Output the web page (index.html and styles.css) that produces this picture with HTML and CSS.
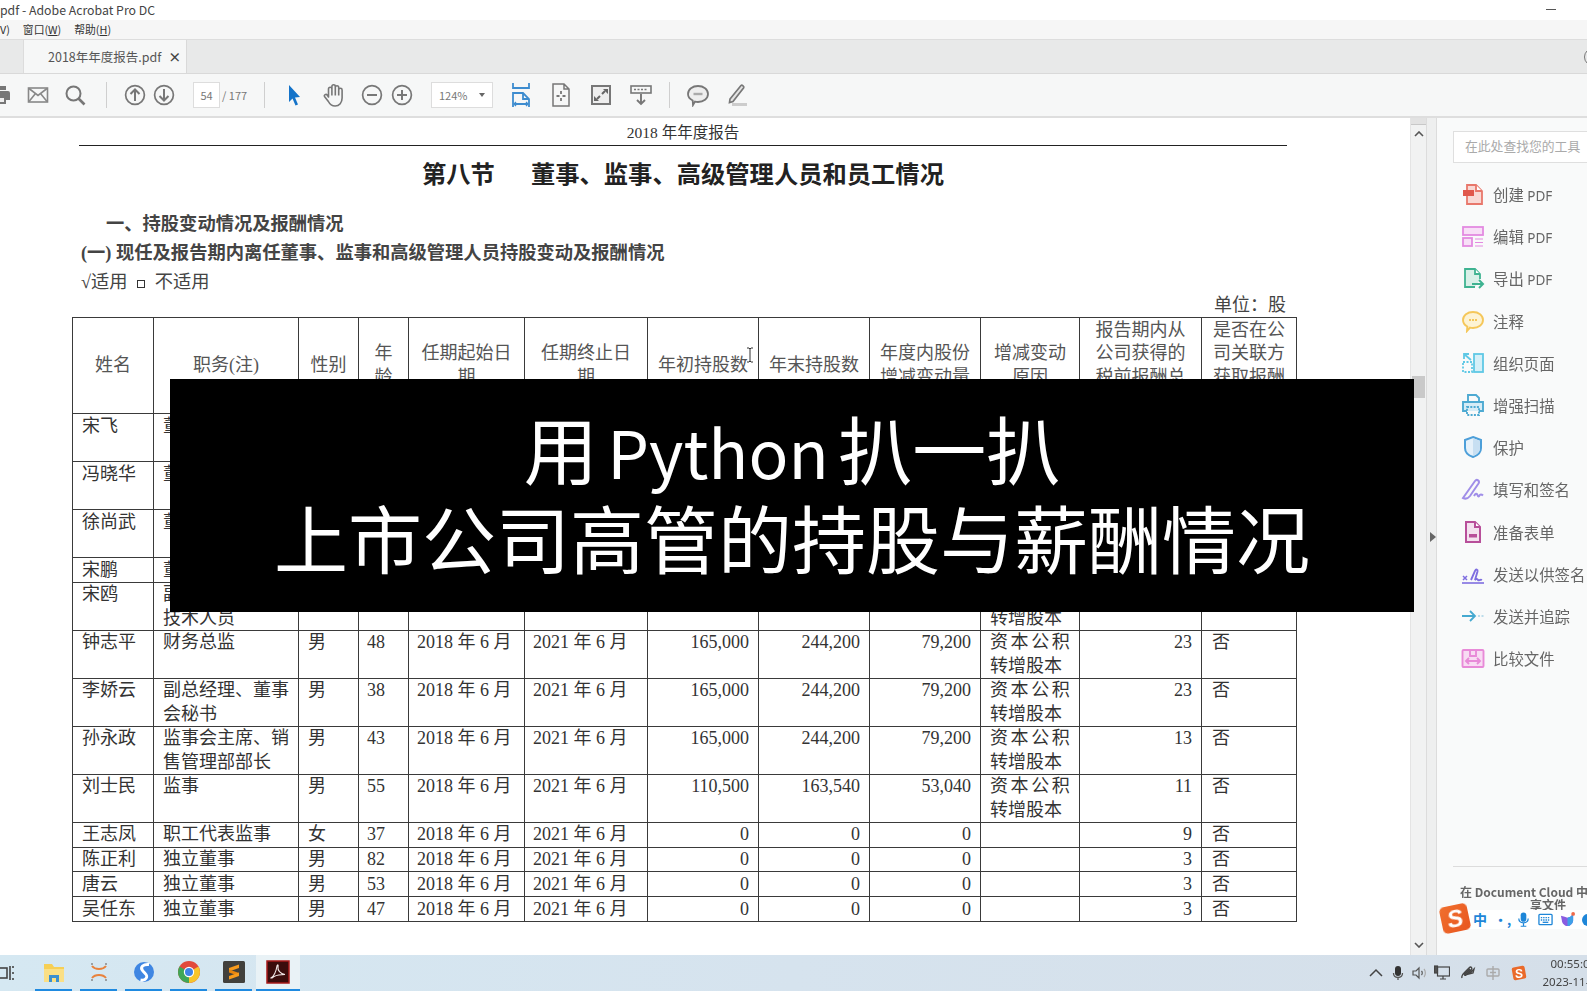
FILE: index.html
```html
<!DOCTYPE html>
<html lang="zh-CN">
<head>
<meta charset="utf-8">
<title>2018年年度报告.pdf - Adobe Acrobat Pro DC</title>
<link rel="stylesheet" href="styles.css">
</head>
<body>
<div class="app">
  <header class="titlebar">
    <span>pdf - Adobe Acrobat Pro DC</span>
    <span class="minimize"></span>
  </header>
  <nav class="menubar">
    <span class="menu-cut">V)</span>
    <span class="menu-win">窗口(<u>W</u>)</span>
    <span class="menu-help">帮助(<u>H</u>)</span>
  </nav>
  <div class="tabbar">
    <div class="tab"><span>2018年年度报告.pdf</span><span class="tab-close">×</span></div>
    <span class="tab-circle"></span>
  </div>
  <div class="toolbar">
    <div class="tb-group first">
      <svg class="ic" viewBox="0 0 24 24"><path d="M7 7V3h10v4M5 8h14a2 2 0 0 1 2 2v7h-4v4H7v-4H3v-7a2 2 0 0 1 2-2z" fill="#777"/><rect x="9" y="15" width="6" height="4" fill="#eee"/></svg>
      <svg class="ic" viewBox="0 0 24 24" fill="none" stroke="#888" stroke-width="1.6"><rect x="2.5" y="5" width="19" height="14"/><path d="M3 5.5l9 7 9-7M3 18.5l6.5-8M21 18.5l-6.5-8"/></svg>
      <svg class="ic" viewBox="0 0 24 24" fill="none" stroke="#777" stroke-width="2"><circle cx="10.5" cy="10.5" r="7"/><path d="M15.5 15.5l6 6" stroke-width="2.6"/></svg>
    </div>
    <span class="tb-div d1"></span>
    <div class="tb-group g2">
      <svg class="ic" viewBox="0 0 24 24" fill="none" stroke="#777" stroke-width="1.7"><circle cx="12" cy="12" r="9.4"/><path d="M12 18V6.5M7.5 11L12 6.5 16.5 11" stroke-width="2"/></svg>
      <svg class="ic" viewBox="0 0 24 24" fill="none" stroke="#777" stroke-width="1.7"><circle cx="12" cy="12" r="9.4"/><path d="M12 6v11.5M7.5 13l4.500 4.500 4.500-4.500" stroke-width="2"/></svg>
    </div>
    <span class="page-input">54</span>
    <span class="page-total">/ 177</span>
    <span class="tb-div d2"></span>
    <svg class="ic cursor" viewBox="0 0 24 24"><path d="M7 2l11 12-5 .5 3 7-2.500 1-3-7L7 19z" fill="#1473c9"/></svg>
    <svg class="ic hand" viewBox="0 0 24 24" fill="none" stroke="#777" stroke-width="1.6" stroke-linejoin="round"><path d="M6.500 13V6a1.700 1.700 0 0 1 3.400 0V3.500a1.700 1.700 0 0 1 3.400 0V4.500a1.700 1.700 0 0 1 3.400 0V7a1.700 1.700 0 0 1 3.400 0v8c0 4.500-2.700 8-7 8-3.500 0-5.200-1.500-6.700-4.500L2.500 13.500c-.8-1.500 1.500-3 2.700-1.500l1.300 2zM9.900 6v6.500M13.300 4.500v8M16.700 5v7.500"/></svg>
    <svg class="ic minus" viewBox="0 0 24 24" fill="none" stroke="#777" stroke-width="1.7"><circle cx="12" cy="12" r="9.400"/><path d="M7 12h10" stroke-width="2"/></svg>
    <svg class="ic plus" viewBox="0 0 24 24" fill="none" stroke="#777" stroke-width="1.7"><circle cx="12" cy="12" r="9.400"/><path d="M7 12h10M12 7v10" stroke-width="2"/></svg>
    <div class="zoom-box"><span>124%</span><span class="caret"></span></div>
    <div class="tb-group g4">
      <svg class="ic" viewBox="0 0 24 24" fill="none" stroke="#3d8ccf" stroke-width="1.800"><path d="M4 0v5h16V0M4 24V10h10l6 6v8M14 10v6h6M6 21h12"/><path d="M7 19l-2 2 2 2M17 19l2 2-2 2" stroke-width="1.300"/></svg>
      <svg class="ic" viewBox="0 0 24 24" fill="none" stroke="#777" stroke-width="1.500"><path d="M4 1h11l5 5v17H4zM15 1v5h5"/><path d="M12 8v3M12 15v3M7.500 13h3M13.500 13h3" stroke-width="1.800"/></svg>
      <svg class="ic" viewBox="0 0 24 24"><rect x="3" y="3" width="18" height="18" fill="#eee" stroke="#777" stroke-width="2"/><path d="M14 6h5v5zM10 18H5v-5z" fill="#666"/><path d="M16 8l-3 3M8 16l3-3" stroke="#666" stroke-width="2"/></svg>
      <svg class="ic" viewBox="0 0 24 24" fill="none" stroke="#777" stroke-width="1.600"><rect x="2" y="3" width="20" height="7"/><path d="M5 6.500h14" stroke-dasharray="2 1.500"/><path d="M12 11v10M8 17l4 4 4-4" stroke-width="1.900"/></svg>
    </div>
    <span class="tb-div d3"></span>
    <div class="tb-group g5">
      <svg class="ic" viewBox="0 0 24 24" fill="#eee" stroke="#777" stroke-width="1.800"><path d="M12 3c5.500 0 10 3.400 10 8s-4.500 8-10 8c-1 0-2-.1-3-.4L7 22l-.3-4.500C3.800 16 2 13.700 2 11c0-4.600 4.500-8 10-8z"/><path d="M7.500 11h9" stroke-width="2.400" stroke="#aaa"/></svg>
      <svg class="ic" viewBox="0 0 24 24" fill="#e4e4e4" stroke="#777" stroke-width="1.700"><path d="M5 16L16 2.500c1-1 3.500 1 2.700 2.300L8 18.500l-3.500 1z"/><path d="M7 21.500h15" stroke="#ccc" stroke-width="3"/></svg>
    </div>
  </div>
  <main class="workspace">
    <section class="doc">
      <div class="doc-head">2018 年年度报告</div>
      <h1 class="doc-title">第八节<span class="title-gap"></span>董事、监事、高级管理人员和员工情况</h1>
      <h2 class="sec-one">一、持股变动情况及报酬情况</h2>
      <h3 class="sec-two">(一) 现任及报告期内离任董事、监事和高级管理人员持股变动及报酬情况</h3>
      <p class="check">√适用 <span class="box"></span> 不适用</p>
      <p class="unit">单位&#xFF1A;股</p>
      <table class="report">
        <colgroup>
          <col class="c1"><col class="c2"><col class="c3"><col class="c4"><col class="c5"><col class="c6"><col class="c7"><col class="c8"><col class="c9"><col class="c10"><col class="c11"><col class="c12">
        </colgroup>
        <thead>
          <tr>
            <th>姓名</th><th>职务(注)</th><th>性别</th><th>年龄</th><th>任期起始日期</th><th>任期终止日期</th><th>年初持股数</th><th>年末持股数</th><th>年度内股份增减变动量</th><th>增减变动原因</th><th class="th-top">报告期内从公司获得的税前报酬总额</th><th class="th-top">是否在公司关联方获取报酬</th>
          </tr>
        </thead>
        <tbody>
          <tr class="tall"><td>宋飞</td><td>董事</td><td></td><td></td><td></td><td></td><td></td><td></td><td></td><td></td><td></td><td></td></tr>
          <tr class="tall"><td>冯晓华</td><td>董事</td><td></td><td></td><td></td><td></td><td></td><td></td><td></td><td></td><td></td><td></td></tr>
          <tr class="tall"><td>徐尚武</td><td>董事</td><td></td><td></td><td></td><td></td><td></td><td></td><td></td><td></td><td></td><td></td></tr>
          <tr><td>宋鹏</td><td>董事</td><td></td><td></td><td></td><td></td><td></td><td></td><td></td><td></td><td></td><td></td></tr>
          <tr class="tall"><td>宋鸥</td><td>副<br>技术人员</td><td></td><td></td><td></td><td></td><td></td><td></td><td></td><td><br>转增股本</td><td></td><td></td></tr>
          <tr><td>钟志平</td><td>财务总监</td><td>男</td><td class="age">48</td><td class="date">2018 年 6 月</td><td class="date">2021 年 6 月</td><td class="num">165,000</td><td class="num">244,200</td><td class="num">79,200</td><td><span class="spread">资本公积</span><br>转增股本</td><td class="num">23</td><td class="no">否</td></tr>
          <tr><td>李娇云</td><td>副总经理、董事<br>会秘书</td><td>男</td><td class="age">38</td><td class="date">2018 年 6 月</td><td class="date">2021 年 6 月</td><td class="num">165,000</td><td class="num">244,200</td><td class="num">79,200</td><td><span class="spread">资本公积</span><br>转增股本</td><td class="num">23</td><td class="no">否</td></tr>
          <tr><td>孙永政</td><td>监事会主席、销<br>售管理部部长</td><td>男</td><td class="age">43</td><td class="date">2018 年 6 月</td><td class="date">2021 年 6 月</td><td class="num">165,000</td><td class="num">244,200</td><td class="num">79,200</td><td><span class="spread">资本公积</span><br>转增股本</td><td class="num">13</td><td class="no">否</td></tr>
          <tr><td>刘士民</td><td>监事</td><td>男</td><td class="age">55</td><td class="date">2018 年 6 月</td><td class="date">2021 年 6 月</td><td class="num">110,500</td><td class="num">163,540</td><td class="num">53,040</td><td><span class="spread">资本公积</span><br>转增股本</td><td class="num">11</td><td class="no">否</td></tr>
          <tr><td>王志凤</td><td>职工代表监事</td><td>女</td><td class="age">37</td><td class="date">2018 年 6 月</td><td class="date">2021 年 6 月</td><td class="num">0</td><td class="num">0</td><td class="num">0</td><td></td><td class="num">9</td><td class="no">否</td></tr>
          <tr><td>陈正利</td><td>独立董事</td><td>男</td><td class="age">82</td><td class="date">2018 年 6 月</td><td class="date">2021 年 6 月</td><td class="num">0</td><td class="num">0</td><td class="num">0</td><td></td><td class="num">3</td><td class="no">否</td></tr>
          <tr><td>唐云</td><td>独立董事</td><td>男</td><td class="age">53</td><td class="date">2018 年 6 月</td><td class="date">2021 年 6 月</td><td class="num">0</td><td class="num">0</td><td class="num">0</td><td></td><td class="num">3</td><td class="no">否</td></tr>
          <tr><td>吴任东</td><td>独立董事</td><td>男</td><td class="age">47</td><td class="date">2018 年 6 月</td><td class="date">2021 年 6 月</td><td class="num">0</td><td class="num">0</td><td class="num">0</td><td></td><td class="num">3</td><td class="no">否</td></tr>
        </tbody>
      </table>
    </section>
    <aside class="scrollbar">
      <span class="sb-cap"></span>
      <svg class="sb-arrow" viewBox="0 0 10 6" fill="none" stroke="#555" stroke-width="1.600"><path d="M1 5l4-4 4 4"/></svg>
      <span class="sb-thumb"></span>
      <svg class="sb-arrow sb-down" viewBox="0 0 10 6" fill="none" stroke="#555" stroke-width="1.600"><path d="M1 1l4 4 4-4"/></svg>
    </aside>
    <div class="gutter"><span class="gutter-arrow"></span></div>
    <aside class="tools">
      <div class="tool-search">在此处查找您的工具</div>
      <ul class="tool-list">
        <li><svg class="tool-ic" viewBox="0 0 24 24"><path d="M6 3h9l6 6v13H6z" fill="#f9d9d5" stroke="#e8776b" stroke-width="1.800"/><path d="M15 3v6h6" fill="#fff" stroke="#e8776b" stroke-width="1.800"/><rect x="2" y="8" width="11" height="6" fill="#e0584c"/></svg><span>创建 <b>PDF</b></span></li>
        <li><svg class="tool-ic" viewBox="0 0 24 24" fill="none" stroke="#e38ae0" stroke-width="1.800"><rect x="2" y="3" width="20" height="8" fill="#f8dff7"/><rect x="2" y="14" width="9" height="8" fill="#f8dff7"/><path d="M14 15h8M14 18.500h8M14 22h8" stroke-width="1"/></svg><span>编辑 <b>PDF</b></span></li>
        <li><svg class="tool-ic" viewBox="0 0 24 24" fill="none" stroke="#3fb391" stroke-width="1.800"><path d="M14 21H4V3h10l5 5v5" fill="#d9f0e8"/><path d="M14 3v5h5" fill="#fff"/><path d="M11 18h11M18 14l4 4-4 4" stroke-width="2"/></svg><span>导出 <b>PDF</b></span></li>
        <li><svg class="tool-ic" viewBox="0 0 24 24" fill="#fdf3d4" stroke="#f5c75a" stroke-width="1.900"><path d="M12 3c5.500 0 10 3.400 10 8s-4.500 8-10 8c-1 0-2-.1-3-.4L6 22l.3-4.500C3.500 16 2 13.700 2 11c0-4.600 4.500-8 10-8z"/><path d="M8 11h8" stroke-dasharray="2 1"/></svg><span>注释</span></li>
        <li><svg class="tool-ic" viewBox="0 0 24 24" fill="none" stroke="#5fc8e5" stroke-width="1.800"><rect x="13" y="3" width="9" height="18" fill="#d5f0f8"/><rect x="2" y="11" width="9" height="10" stroke-dasharray="2 1.500"/><path d="M10 9L3 3M3 8V3h5"/></svg><span>组织页面</span></li>
        <li><svg class="tool-ic" viewBox="0 0 24 24" fill="none" stroke="#4eaad2" stroke-width="1.900"><path d="M7 8V2h8l3 3v3"/><path d="M6 18H2V9h20v9h-4" fill="#d6ecf6"/><path d="M6 14h12v8H6z" stroke-dasharray="2 1.300"/></svg><span>增强扫描</span></li>
        <li><svg class="tool-ic" viewBox="0 0 24 24"><path d="M12 2l8 3v8c0 4.500-3.500 7.500-8 9-4.500-1.500-8-4.500-8-9V5z" fill="#e6f1fa" stroke="#4d9fd9" stroke-width="2"/><path d="M12 3v18c3.500-1.300 7-4 7-8V6z" fill="#c7dff2"/></svg><span>保护</span></li>
        <li><svg class="tool-ic" viewBox="0 0 24 24" fill="none" stroke="#a08ee8" stroke-width="2"><path d="M2 21L14 4c2-2.500 5 0 3.500 2.500L9 19c-2 2.500-5 3-7 2zM13 19c1.500-2.500 3-3 3.500-1s1.500 2 2 .5 2-1.500 3.500 0"/></svg><span>填写和签名</span></li>
        <li><svg class="tool-ic" viewBox="0 0 24 24" fill="none" stroke="#b84f9a" stroke-width="2"><path d="M5 2h9l5 5v15H5z" fill="#f4e2ef"/><path d="M14 2v5h5" fill="#fff"/><rect x="8" y="14" width="8" height="3.500" fill="#b84f9a" stroke="none"/></svg><span>准备表单</span></li>
        <li><svg class="tool-ic" viewBox="0 0 24 24" fill="none" stroke="#7f6ee0" stroke-width="1.900"><path d="M1 21h22" stroke-width="1.600"/><path d="M2 14l4 4M6 14l-4 4" stroke-width="1.500"/><path d="M10 18l4-9c1-2.500 3-1.500 2.500.5L14 18c2-2 2-1 3 0s2-1 4 0"/></svg><span>发送以供签名</span></li>
        <li><svg class="tool-ic" viewBox="0 0 24 24" fill="none" stroke="#45a9d0" stroke-width="1.800"><path d="M1 12h13M9 7l5 5-5 5"/><path d="M17 12h6" stroke="#bcdcea" stroke-dasharray="2 1.500"/></svg><span>发送并追踪</span></li>
        <li><svg class="tool-ic" viewBox="0 0 24 24" fill="#f8dcf3" stroke="#e88ad8" stroke-width="1.900"><rect x="1.500" y="4" width="21" height="17" rx="1"/><path d="M9 4v6h6V4M5 15h14M8 12l-3 3 3 3M16 12l3 3-3 3" fill="none"/></svg><span>比较文件</span></li>
      </ul>
      <div class="cloud">
        <hr class="cloud-rule">
        <p class="cloud-text">在 Document Cloud 中存储和共享文件</p>
      </div>
    </aside>
  </main>
  <footer class="taskbar">
    <svg class="taskview" viewBox="0 0 16 18" fill="none" stroke="#444" stroke-width="1.600"><rect x="-6" y="4" width="13" height="10"/><path d="M10 2v14M13 2v2M13 8v2M13 14v2"/></svg>
    <div class="task-btn"><svg class="task-ic" viewBox="0 0 24 24"><path d="M2 4h8l2 3h10v15H2z" fill="#f6cf55"/><rect x="2" y="9" width="20" height="13" fill="#fadf85"/><path d="M7 15h10v7h-3v-4h-4v4H7z" fill="#3a8fd0"/></svg></div>
    <div class="task-btn"><svg class="task-ic" viewBox="0 0 24 24" fill="none" stroke="#e8823c" stroke-width="2"><path d="M5 6c3 4 11 4 14 0M5 18c3-4 11-4 14 0"/><circle cx="5" cy="4" r="1" fill="#888" stroke="none"/><circle cx="19" cy="4" r="1" fill="#888" stroke="none"/><circle cx="5" cy="20" r="1" fill="#888" stroke="none"/><circle cx="19" cy="20" r="1" fill="#888" stroke="none"/></svg></div>
    <div class="task-btn"><svg class="task-ic" viewBox="0 0 24 24"><circle cx="12" cy="12" r="10" fill="#3f86e2"/><path d="M17 4.500C11 4 8 7 10.500 10.500s6 4.500 3.500 8c-1 1.500-3 2-5.500 1.500" fill="none" stroke="#fff" stroke-width="3"/></svg></div>
    <div class="task-btn"><svg class="task-ic" viewBox="0 0 24 24"><circle cx="12" cy="12" r="11" fill="#e24a3b"/><path d="M12 12L21.500 6.500A11 11 0 0 1 12 23z" fill="#f7c52b"/><path d="M12 12L12 23A11 11 0 0 1 2.500 6.500z" fill="#3fa757"/><circle cx="12" cy="12" r="5.200" fill="#fff"/><circle cx="12" cy="12" r="4" fill="#3f84e5"/></svg></div>
    <div class="task-btn"><svg class="task-ic" viewBox="0 0 24 24"><rect x="1" y="1" width="22" height="22" rx="1.500" fill="#41403c"/><path d="M17 4.500L7 8v3.500l10-3.500z" fill="#f89b1c"/><path d="M7 9.500l10 3.500v3L7 12.500z" fill="#e8860f"/><path d="M17 12.500L7 16v3.500l10-3.500z" fill="#f89b1c"/></svg></div>
    <div class="task-btn active"><svg class="task-ic" viewBox="0 0 24 24"><rect x="1" y="1" width="22" height="22" fill="#3a0c0c" stroke="#a81a1a" stroke-width="1.500"/><path d="M5 18c3-2 5-6 6-12 .5-2 1.500-1 1 1-.500 3 2 7 7 7.500-3.500 0-8 .5-11 2-1 .5-2 2-3 1.500z" fill="none" stroke="#f2e8e8" stroke-width="1.100"/></svg></div>
    <div class="tray">
      <svg class="tray-ic" viewBox="0 0 16 16" fill="none" stroke="#444" stroke-width="1.500"><path d="M2 11l6-6 6 6"/></svg>
      <svg class="tray-ic" viewBox="0 0 16 16"><rect x="5" y="1" width="6" height="10" rx="3" fill="#333"/><path d="M3.500 8c0 6 9 6 9 0M8 13v2" fill="none" stroke="#555" stroke-width="1.300"/></svg>
      <svg class="tray-ic" viewBox="0 0 16 16" fill="none" stroke="#555" stroke-width="1.200"><path d="M1 6h3l3-3v10l-3-3H1z"/><path d="M9.500 6c1 1 1 3 0 4" /><path d="M12 4c1.800 2 1.800 6 0 8" stroke="#aaa"/></svg>
      <svg class="tray-ic" viewBox="0 0 16 16" fill="none" stroke="#444" stroke-width="1.200"><rect x="3.500" y="2" width="12" height="9"/><path d="M9 11v3M6 14h6"/><rect x="0.500" y="1" width="3" height="7" fill="#555"/></svg>
      <svg class="tray-ic t-gap" viewBox="0 0 16 16" fill="none" stroke="#444" stroke-width="1.400"><path d="M2 13c-1-2 1-4 3-6l4-4c2-2 4 0 2 2L6 10c-1 1-2 0-1-1l5-5M9 9l5-5-1 4z"/></svg>
      <svg class="tray-ic t-gap" viewBox="0 0 16 16" fill="none" stroke="#aaa" stroke-width="1.400"><rect x="2" y="4" width="12" height="7" rx="1"/><path d="M8 1v14M5 7.500h6"/></svg>
      <svg class="tray-ic t-gap" viewBox="0 0 16 16"><rect x="1.500" y="1.500" width="13" height="13" rx="2" fill="#ea6a2a" transform="rotate(-10 8 8)"/><text x="8" y="12.500" class="tray-s">S</text></svg>
      <div class="clock"><span class="clock-time">00:55:0</span><span class="clock-date">2023-11-</span></div>
    </div>
  </footer>
  <div class="strip"></div>
</div>
<svg class="ibeam" viewBox="0 0 8 16" fill="none" stroke="#333" stroke-width="1"><path d="M1 1h2l1 1 1-1h2M4 2v12M1 15h2l1-1 1 1h2"/></svg>
<div class="banner">
  <p class="banner-one">用 <span class="banner-latin">Python</span> 扒一扒</p>
  <p>上市公司高管的持股与薪酬情况</p>
</div>
<div class="ime">
  <div class="ime-bar">
    <span class="ime-zh">中</span>
    <span class="ime-dot">•,</span>
    <svg class="ime-ic" viewBox="0 0 16 16"><rect x="5" y="0.500" width="6" height="10" rx="3" fill="#1e86d8"/><path d="M3 7c0 6 10 6 10 0M8 12v3M5 15.200h6" fill="none" stroke="#1e86d8" stroke-width="1.300"/></svg>
    <svg class="ime-ic" viewBox="0 0 16 16" fill="none" stroke="#1e86d8" stroke-width="1.400"><rect x="1" y="2.500" width="14" height="11" rx="1"/><path d="M3 6h10M3 8.500h10" stroke-dasharray="1.500 1"/><path d="M5 11h6"/></svg>
    <svg class="ime-ic" viewBox="0 0 16 16"><path d="M1 4l4 1 3 1 3-1 3-3v7c0 3-3 6-6 6s-6-3-6-6z" fill="#8a5ce0"/><path d="M8 6l3-1 3-3v7c0 3-3 6-6 6z" fill="#3fa0e8"/><circle cx="14" cy="2" r="2" fill="#ef6a4a"/></svg>
    <span class="ime-end"></span>
  </div>
  <div class="ime-logo">S</div>
</div>
</body>
</html>
```
FILE: styles.css
```css
* { box-sizing: border-box; }
html, body { margin: 0; padding: 0; width: 1587px; height: 993px; overflow: hidden; background: #fff; }
body { position: relative; font-family: "Noto Sans CJK SC", "Noto Sans", sans-serif; color: #333; }
p, h1, h2, h3, ul { margin: 0; padding: 0; }

.app { width: 1587px; height: 993px; display: flex; flex-direction: column; overflow: hidden; filter: blur(0.55px); }

/* window chrome */
.titlebar { flex: 0 0 20px; background: #fff; display: flex; justify-content: space-between; align-items: center; font-size: 12.3px; line-height: 20px; color: #444; padding-right: 31px; }
.minimize { width: 10px; height: 1px; background: #555; margin-top: -2px; }
.menubar { flex: 0 0 19px; background: #f6f6f6; font-size: 10.8px; line-height: 19px; color: #333; display: flex; border-bottom: 1px solid #ddd; }
.menu-win { margin-left: 13px; }
.menu-help { margin-left: 13px; }
.tabbar { flex: 0 0 34px; background: #e8e9e9; display: flex; justify-content: space-between; align-items: stretch; border-bottom: 1px solid #d9d9d9; }
.tab { margin-left: 23px; width: 164px; background: #f6f7f7; padding-left: 24px; display: flex; align-items: center; font-size: 12.5px; color: #555; border-right: 1px solid #d9d9d9; border-left: 1px solid #dcdcdc; }
.tab-close { margin-left: 7px; font-size: 13px; font-weight: 700; color: #444; }
.tab-circle { width: 18px; height: 18px; border: 1.5px solid #777; border-radius: 50%; margin: 8px -15px 0 0; }
.toolbar { flex: 0 0 44px; background: #f6f7f7; display: flex; align-items: center; border-bottom: 2px solid #dedede; }
.tb-group { display: flex; align-items: center; }
.tb-group.first { margin-left: -11px; gap: 13px; }
.tb-group.g2 { margin-left: 16px; gap: 5px; }
.tb-group.g4 { margin-left: 16px; gap: 16px; }
.tb-group.g5 { margin-left: 16px; gap: 15px; }
.ic { width: 24px; height: 24px; flex: none; }
.tb-div { width: 1px; height: 26px; background: #cfcfcf; flex: none; }
.d1 { margin-left: 19px; }
.d2 { margin-left: 17px; }
.d3 { margin-left: 16px; }
.page-input { margin-left: 17px; width: 27px; height: 26px; background: #fff; border: 1px solid #ddd; font-size: 11px; line-height: 24px; text-align: center; color: #777; }
.page-total { margin-left: 2px; width: 25px; font-size: 11px; color: #777; white-space: nowrap; }
.cursor { margin-left: 17px; }
.hand { margin-left: 16px; }
.minus { margin-left: 14px; }
.plus { margin-left: 6px; }
.zoom-box { margin-left: 17px; width: 62px; height: 26px; background: #fff; border: 1px solid #ddd; display: flex; align-items: center; justify-content: space-between; padding: 0 7px 0 7px; font-size: 11px; color: #777; }
.caret { width: 0; height: 0; border-left: 3.5px solid transparent; border-right: 3.5px solid transparent; border-top: 4px solid #666; }

.workspace { flex: 0 0 837px; display: flex; overflow: hidden; }
.doc { flex: 0 0 1410px; background: #fff; padding-top: 6px; font-family: "Liberation Serif", "Noto Sans CJK SC", serif; color: #222; overflow: hidden; }
.doc-head { margin: 0 0 0 79px; width: 1208px; height: 22px; border-bottom: 1px solid #222; text-align: center; font-size: 15.5px; line-height: 18px; color: #333; }
.doc-title { margin-top: 10px; width: 1366px; font-size: 24.3px; line-height: 34px; font-weight: 700; text-align: center; font-family: "Noto Sans CJK SC", sans-serif; color: #222; }
.title-gap { display: inline-block; width: 36px; }
.sec-one { margin: 22px 0 0 106px; font-size: 18.3px; line-height: 24px; font-weight: 700; color: #444; }
.sec-two { margin: 5px 0 0 81px; font-size: 18.3px; line-height: 24px; font-weight: 700; color: #444; }
.check { margin: 5px 0 0 81px; font-size: 18.3px; line-height: 24px; color: #444; }
.box { display: inline-block; width: 8px; height: 8px; border: 1px solid #333; margin: 0 5px 0 5px; }
.unit { margin: 0 0 0 1214px; width: 72px; font-size: 18px; line-height: 23px; text-align: right; white-space: nowrap; color: #444; }

.report { margin-left: 72px; width: 1224px; table-layout: fixed; border-collapse: collapse; font-size: 18px; line-height: 23.25px; color: #333; }
.c1 { width: 81px; } .c2 { width: 145px; } .c3 { width: 60px; } .c4 { width: 50px; } .c5 { width: 116px; } .c6 { width: 123px; }
.c7, .c8, .c9 { width: 111px; } .c10 { width: 99px; } .c11 { width: 122px; } .c12 { width: 95px; }
.report th, .report td { border: 1px solid #3a3a3a; vertical-align: top; }
.report th { height: 96px; padding: 0 8px; vertical-align: middle; font-weight: 400; color: #555; }
.report th.th-top { vertical-align: top; padding-top: 1px; }
.report td { padding: 0.5px 9px 0 9px; white-space: nowrap; }
.report tr.tall td { height: 48px; }
.report td.num { text-align: right; padding-right: 9px; }
.report td.age { padding-left: 8px; }
.report td.date { padding-left: 8px; }
.report td.no { padding-left: 10px; }
.spread { letter-spacing: 2.6px; }

.scrollbar { flex: 0 0 17px; background: #f1f2f2; display: flex; flex-direction: column; align-items: center; border-left: 1px solid #e4e4e4; border-right: 1px solid #dcdcdc; }
.sb-cap { width: 100%; height: 7px; background: #e2e2e2; border-bottom: 1px solid #c8c8c8; flex: none; }
.sb-arrow { width: 10px; height: 6px; margin-top: 6px; flex: none; }
.sb-thumb { width: 13px; height: 22px; margin-top: 239px; background: #c9c9c9; flex: none; }
.sb-down { margin-top: auto; margin-bottom: 7px; }
.gutter { flex: 0 0 10px; background: #eeefef; border-right: 1px solid #dcdcdc; display: flex; align-items: center; justify-content: center; }
.gutter-arrow { width: 0; height: 0; border-top: 5px solid transparent; border-bottom: 5px solid transparent; border-left: 6px solid #666; margin-left: 2px; }

.tools { flex: 1; background: #f9fafa; display: flex; flex-direction: column; overflow: hidden; position: relative; }
.tool-search { flex: none; margin: 13px 0 0 16px; width: 160px; height: 32px; background: #fff; border: 1px solid #dfdfdf; font-size: 12.800px; line-height: 28px; color: #aaa; padding-left: 11px; white-space: nowrap; }
.tool-list { list-style: none; margin-top: 10px; flex: none; }
.tool-list li { height: 42.2px; display: flex; align-items: center; gap: 8px; padding-left: 24px; font-size: 15.400px; color: #666; white-space: nowrap; }
.tool-list b { font-family: "Noto Sans", sans-serif; font-weight: 400; font-size: 13.500px; }
.tool-ic { width: 24px; height: 24px; flex: none; }
.cloud { margin-top: auto; margin-bottom: 44px; flex: none; }
.cloud-rule { margin: 0 0 0 16px; width: 140px; border: 0; border-top: 1px solid #dcdcdc; }
.cloud-text { margin: 18px 0 0 17px; width: 188px; font-size: 12px; line-height: 13px; font-weight: 700; text-align: center; color: #666; }

/* taskbar */
.taskbar { flex: 0 0 36px; background: linear-gradient(90deg, #d5e8f2 0%, #d6e3ee 50%, #d5dfe9 100%); display: flex; align-items: stretch; }
.taskview { width: 16px; height: 18px; align-self: center; flex: none; }
.task-btn { flex: none; width: 37px; margin-right: 8px; display: flex; align-items: center; justify-content: center; border-bottom: 2px solid #1f8ae0; }
.taskview + .task-btn { margin-left: 19px; }
.task-btn.active { width: 44px; margin-left: -4px; margin-right: 0; background: #e9f2f6; }
.task-ic { width: 24px; height: 24px; }
.tray { margin-left: 1065px; display: flex; align-items: center; flex: none; }
.tray-ic { width: 16px; height: 16px; margin: 0 3px; flex: none; }
.tray-ic.t-gap { margin-left: 6.500px; }
.tray-s { font: 700 12px "Liberation Sans", sans-serif; fill: #fff; text-anchor: middle; }
.clock { margin-left: 13px; width: 60px; display: flex; flex-direction: column; font-size: 11.500px; line-height: 18px; color: #444; white-space: nowrap; font-family: "Noto Sans", sans-serif; }
.clock-time { padding-left: 8px; }
.strip { flex: 0 0 3px; background: #fff; }

/* things on top of the recording */
.ibeam { position: absolute; left: 746px; top: 347px; width: 8px; height: 16px; }
.banner { position: absolute; left: 170px; top: 379px; width: 1244px; height: 233px; padding-bottom: 8px; background: #000; color: #fff; display: flex; flex-direction: column; justify-content: center; align-items: center; font-family: "Noto Sans CJK SC", "Noto Sans", sans-serif; font-size: 74px; line-height: 86px; font-weight: 400; white-space: nowrap; }
.banner-one { word-spacing: -7px; }
.banner-latin { font-size: 66px; }
.ime { position: absolute; left: 1441px; top: 905px; width: 146px; height: 30px; }
.ime-logo { position: absolute; left: 0; top: 0; width: 28px; height: 27px; background: linear-gradient(135deg, #f0702e, #e8551f); border-radius: 5px; transform: rotate(-12deg); color: #fff; font: italic 700 24px/27px "Liberation Sans", sans-serif; text-align: center; }
.ime-bar { position: absolute; left: 12px; top: 5px; width: 134px; height: 19px; background: #fff; display: flex; align-items: center; padding-left: 20px; gap: 7px; overflow: hidden; }
.ime-zh { color: #1e86d8; font-size: 14px; font-weight: 700; line-height: 19px; }
.ime-dot { color: #1e86d8; font-size: 13px; font-weight: 700; width: 15px; line-height: 19px; }
.ime-ic { width: 15px; height: 15px; flex: none; }
.ime-end { width: 12px; height: 12px; border-radius: 50%; background: #1e86d8; flex: none; }
```
